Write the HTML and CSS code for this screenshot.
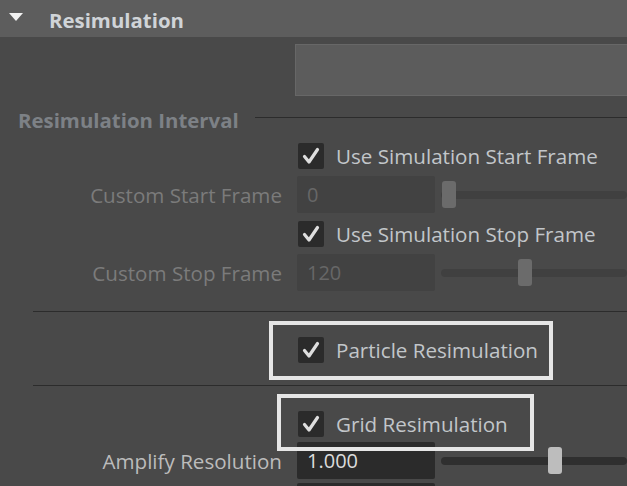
FILE: index.html
```html
<!DOCTYPE html>
<html>
<head>
<meta charset="utf-8">
<link rel="stylesheet" href="styles.css">
</head>
<body>
<div class="panel">
  <div class="header">
    <span class="tri"></span>
    <span class="title">Resimulation</span>
  </div>
  <div class="content">
    <div class="top-row"><div class="topbox"></div></div>
    <div class="group-head"><span class="group-title">Resimulation Interval</span><span class="rule"></span></div>
    <div class="rows">
      <div class="row">
        <div class="label"></div>
        <div class="check"><span class="box"><svg viewBox="0 0 26 26" width="26" height="26"><polyline points="6.5,13.5 11,19 19.5,6.5" fill="none" stroke="#dedede" stroke-width="3.2" stroke-linecap="round" stroke-linejoin="round"/></svg></span><span class="check-text">Use Simulation Start Frame</span></div>
      </div>
      <div class="row">
        <div class="label dis">Custom Start Frame</div>
        <div class="field dis">0</div>
        <div class="slider dis"><span class="track"></span><span class="thumb" style="left:1px"></span></div>
      </div>
      <div class="row">
        <div class="label"></div>
        <div class="check"><span class="box"><svg viewBox="0 0 26 26" width="26" height="26"><polyline points="6.5,13.5 11,19 19.5,6.5" fill="none" stroke="#dedede" stroke-width="3.2" stroke-linecap="round" stroke-linejoin="round"/></svg></span><span class="check-text">Use Simulation Stop Frame</span></div>
      </div>
      <div class="row">
        <div class="label dis">Custom Stop Frame</div>
        <div class="field dis">120</div>
        <div class="slider dis"><span class="track"></span><span class="thumb" style="left:77px"></span></div>
      </div>
    </div>
    <div class="sep"></div>
    <div class="section">
      <div class="row">
        <div class="label"></div>
        <div class="check"><span class="box"><svg viewBox="0 0 26 26" width="26" height="26"><polyline points="6.5,13.5 11,19 19.5,6.5" fill="none" stroke="#dedede" stroke-width="3.2" stroke-linecap="round" stroke-linejoin="round"/></svg></span><span class="check-text">Particle Resimulation</span></div>
      </div>
    </div>
    <div class="sep"></div>
    <div class="section last">
      <div class="row">
        <div class="label"></div>
        <div class="check"><span class="box"><svg viewBox="0 0 26 26" width="26" height="26"><polyline points="6.5,13.5 11,19 19.5,6.5" fill="none" stroke="#dedede" stroke-width="3.2" stroke-linecap="round" stroke-linejoin="round"/></svg></span><span class="check-text">Grid Resimulation</span></div>
      </div>
      <div class="row">
        <div class="label">Amplify Resolution</div>
        <div class="field">1.000</div>
        <div class="slider"><span class="track"></span><span class="thumb" style="left:107px"></span></div>
      </div>
      <div class="row next">
        <div class="label"></div>
        <div class="field"></div>
      </div>
    </div>
  </div>
  <div class="hl hl-particle"></div>
  <div class="hl hl-grid"></div>
</div>
</body>
</html>
```
FILE: styles.css
```css
html, body {
  margin: 0;
  padding: 0;
  background: #494949;
}
body {
  width: 627px;
  height: 486px;
  overflow: hidden;
  font-family: "Open Sans", "Noto Sans", sans-serif;
}
.panel {
  position: relative;
  width: 627px;
}
.header {
  height: 37px;
  background: #5d5d5d;
  display: flex;
  align-items: center;
}
.tri {
  width: 0;
  height: 0;
  margin-left: 9px;
  margin-top: -3px;
  border-left: 7.5px solid transparent;
  border-right: 7.5px solid transparent;
  border-top: 8px solid #f2f2f2;
}
.title {
  margin-left: 26px;
  font-weight: 700;
  font-size: 20.4px;
  color: #d0d4d8;
  margin-top: 2px;
}
.content {
  display: flex;
  flex-direction: column;
}
.top-row {
  padding-top: 7px;
  padding-left: 295px;
}
.topbox {
  height: 50px;
  background: #5c5c5c;
  border: 1px solid #676767;
  border-right: none;
}
.group-head {
  margin-top: 7px;
  height: 34px;
  display: flex;
  align-items: center;
  padding-left: 18px;
}
.group-title {
  font-weight: 700;
  font-size: 20.4px;
  color: #7d8186;
}
.rule {
  flex: 1;
  height: 1px;
  background: #2c2c2c;
  margin-left: 16px;
  margin-top: -5px;
}
.rows {
  display: flex;
  flex-direction: column;
  gap: 2px;
}
.row {
  height: 37px;
  display: flex;
  align-items: center;
}
.label {
  width: 282px;
  flex: none;
  padding-right: 15px;
  text-align: right;
  font-size: 20.6px;
  color: #bcbcbc;
}
.label.dis {
  color: #7b7b7b;
}
.check {
  display: flex;
  align-items: center;
  margin-left: 1px;
}
.box {
  width: 26px;
  height: 26px;
  background: #2b2b2b;
  border-radius: 2px;
  display: block;
}
.box svg {
  display: block;
}
.check-text {
  margin-left: 12px;
  font-size: 20.6px;
  color: #c2c6ca;
}
.field {
  width: 128px;
  height: 37px;
  flex: none;
  padding-left: 10px;
  box-sizing: content-box;
  background: #2b2b2b;
  border-radius: 2px;
  font-size: 20px;
  line-height: 37px;
  color: #dcdcdc;
}
.field.dis {
  background: #424242;
  color: #676767;
}
.slider {
  position: relative;
  flex: 1;
  height: 37px;
  margin-left: 6px;
  display: flex;
  align-items: center;
}
.track {
  flex: 1;
  height: 8px;
  border-radius: 4px;
  background: #2f2f2f;
}
.slider.dis .track {
  background: #404040;
}
.thumb {
  position: absolute;
  top: 5px;
  width: 14px;
  height: 27px;
  border-radius: 3px;
  background: #bdbdbd;
}
.slider.dis .thumb {
  background: #6b6b6b;
}
.sep {
  height: 1px;
  margin-left: 33px;
  background: #2c2c2c;
  margin-top: 20px;
}
.section {
  padding-top: 19px;
  padding-bottom: 17px;
  display: flex;
  flex-direction: column;
}
.section.last {
  padding-top: 19px;
  gap: 0;
}
.row.next {
  margin-top: 4px;
}
.section + .sep {
  margin-top: 0;
}
.hl {
  position: absolute;
  border: 4px solid #e6e6e6;
  box-sizing: border-box;
}
.hl-particle {
  left: 269px;
  top: 321px;
  width: 284px;
  height: 59px;
}
.hl-grid {
  left: 277px;
  top: 394px;
  width: 257px;
  height: 57px;
}
```
